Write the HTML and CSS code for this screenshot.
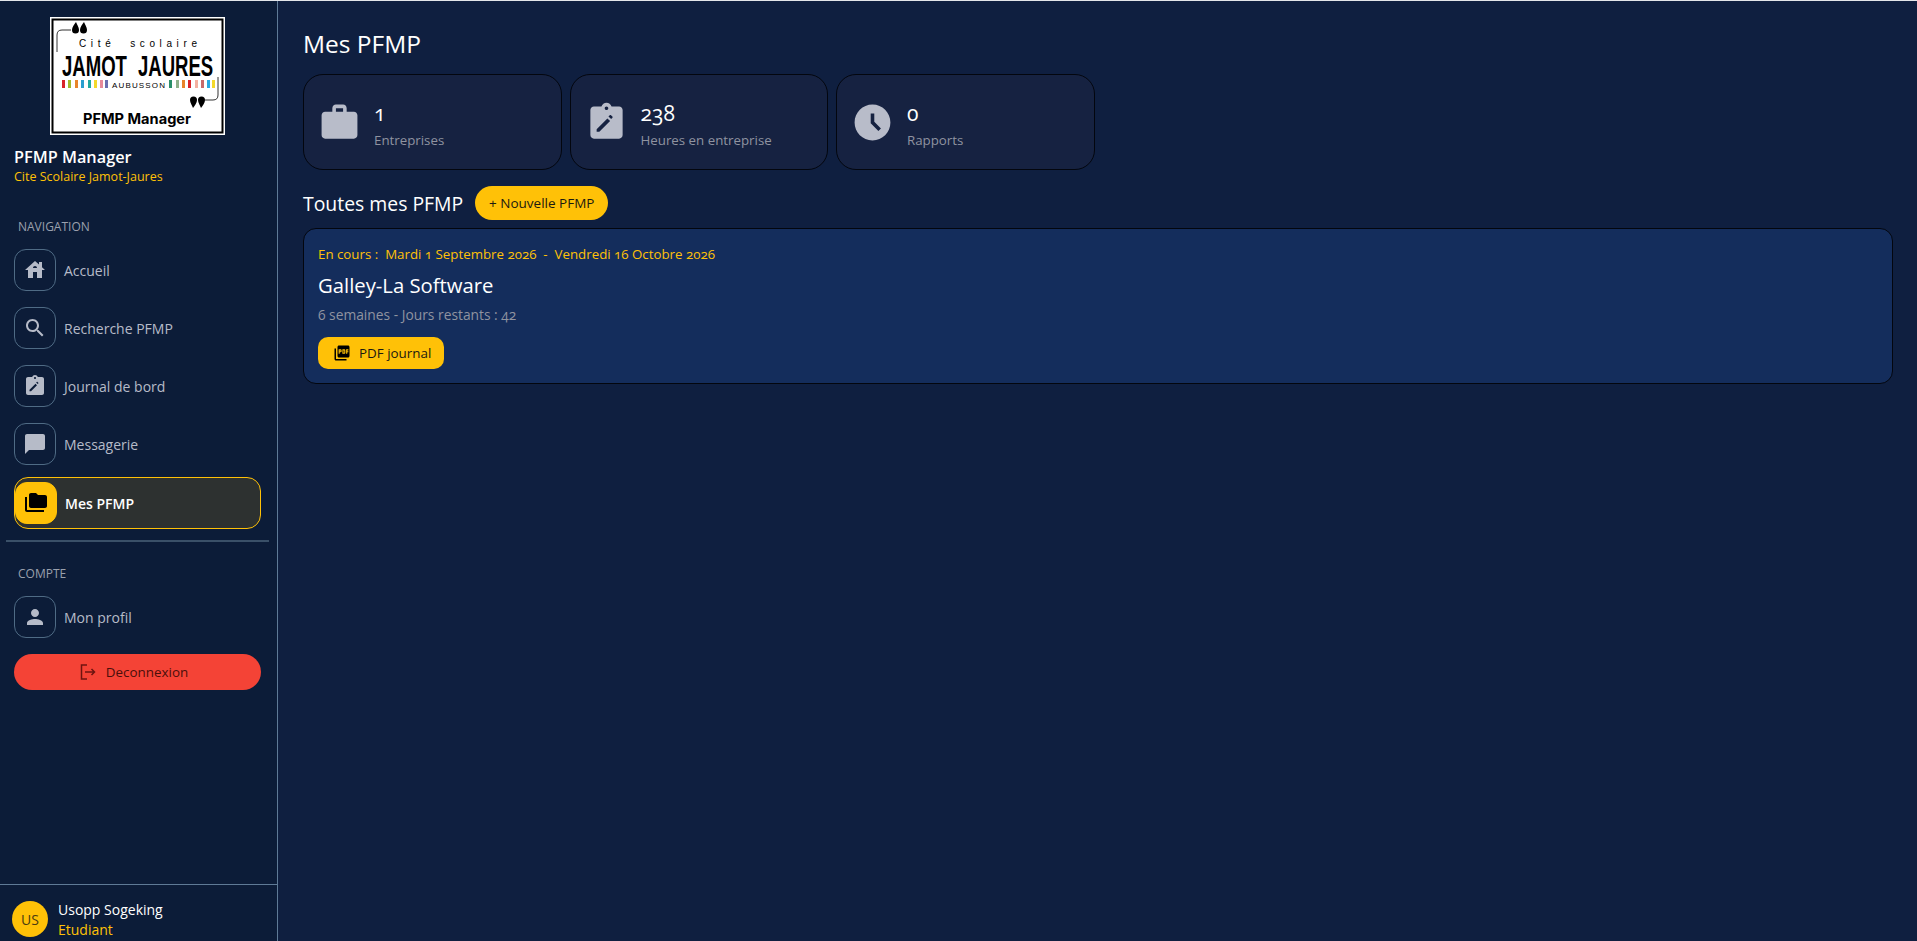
FILE: index.html
```html
<!DOCTYPE html>
<html lang="fr">
<head>
<meta charset="UTF-8">
<title>Mes PFMP</title>
<link rel="stylesheet" href="styles.css">
</head>
<body>
<div class="app">
  <aside class="sidebar">
    <svg class="logo" width="175" height="118" viewBox="0 0 175 118">
      <rect x="1" y="1" width="173" height="116" fill="#fff" stroke="#fff" stroke-width="2"/>
      <rect x="2.5" y="2.5" width="170" height="113" fill="#fff" stroke="#000" stroke-width="2"/>
      <path d="M7 35V18q0-5 5-5h9M168 60v18q0 5-5 5h-8" fill="none" stroke="#333" stroke-width="1"/>
      <g fill="#000">
        <path d="M26 5c-2 3-4 5-4 8a3.500 3.500 0 0 0 7 0c0-3-2-5-3-8zM34 5c-2 3-4 5-4 8a3.500 3.500 0 0 0 7 0c0-3-2-5-3-8z"/>
        <path d="M143 91c2-3 4-5 4-8a3.500 3.500 0 0 0-7 0c0 3 2 5 3 8zM151 91c2-3 4-5 4-8a3.500 3.500 0 0 0-7 0c0 3 2 5 3 8z"/>
      </g>
      <text class="logo-city" x="29" y="30" textLength="118">Cité  scolaire</text>
      <text class="logo-name" transform="translate(12 59) scale(.64 1)">JAMOT</text>
      <text class="logo-name" transform="translate(88 59) scale(.64 1)">JAURES</text>
      <g>
        <rect x="12" y="63" width="3" height="8" fill="#d8232a"/><rect x="18" y="63" width="3" height="8" fill="#9fb92a"/>
        <rect x="25" y="63" width="3" height="8" fill="#e8842a"/><rect x="31" y="63" width="3" height="8" fill="#2a9fd0"/>
        <rect x="38" y="63" width="3" height="8" fill="#1fa8a0"/><rect x="44" y="63" width="3" height="8" fill="#f4d92a"/>
        <rect x="50" y="63" width="3" height="8" fill="#e88a9a"/><rect x="55" y="63" width="3" height="8" fill="#6a6fb0"/>
        <rect x="119" y="63" width="3" height="8" fill="#2a8f6a"/><rect x="126" y="63" width="3" height="8" fill="#8fb08a"/>
        <rect x="132" y="63" width="3" height="8" fill="#e8842a"/><rect x="138" y="63" width="3" height="8" fill="#d8232a"/>
        <rect x="145" y="63" width="3" height="8" fill="#f4b0a0"/><rect x="151" y="63" width="3" height="8" fill="#c86a6a"/>
        <rect x="157" y="63" width="3" height="8" fill="#2aa8e0"/><rect x="162" y="63" width="3" height="8" fill="#f4d92a"/>
      </g>
      <text class="logo-town" x="62" y="71" textLength="53">AUBUSSON</text>
      <text class="logo-app" x="33" y="107" textLength="108" lengthAdjust="spacingAndGlyphs">PFMP Manager</text>
    </svg>

    <div class="brand">PFMP Manager</div>
    <div class="brand-sub">Cite Scolaire Jamot-Jaures</div>

    <div class="nav-title">NAVIGATION</div>
    <nav class="nav">
      <a class="nav-item">
        <span class="nav-icon"><svg viewBox="0 0 24 24"><path d="M19 9.300V4h-3v2.600L12 3 2 12h3v8h5v-6h4v6h5v-8h3l-3-2.700zm-9 .7c0-1.100.9-2 2-2s2 .9 2 2h-4z"/></svg></span>
        Accueil
      </a>
      <a class="nav-item">
        <span class="nav-icon"><svg viewBox="0 0 24 24"><path d="M15.500 14h-.79l-.28-.27C15.410 12.590 16 11.110 16 9.500 16 5.910 13.090 3 9.500 3S3 5.910 3 9.500 5.910 16 9.500 16c1.610 0 3.090-.59 4.230-1.570l.27.28v.79l5 4.990L20.490 19l-4.990-5zm-6 0C7.010 14 5 11.990 5 9.500S7.010 5 9.500 5 14 7.010 14 9.500 11.990 14 9.500 14z"/></svg></span>
        Recherche PFMP
      </a>
      <a class="nav-item">
        <span class="nav-icon"><svg viewBox="0 0 24 24"><path d="M19 3h-4.180C14.400 1.840 13.300 1 12 1s-2.400.84-2.820 2H5c-1.100 0-2 .9-2 2v14c0 1.100.9 2 2 2h14c1.100 0 2-.9 2-2V5c0-1.100-.9-2-2-2zm-7 0c.55 0 1 .45 1 1s-.45 1-1 1-1-.45-1-1 .45-1 1-1z"/><path class="pen" d="M7 15.500V17h1.500l6-6L13 9.500l-6 6zm8.800-6.300c.2-.2.2-.5 0-.7l-.8-.8c-.2-.2-.5-.2-.7 0l-.7.7 1.500 1.500.7-.7z" transform="translate(-.5 .2)"/></svg></span>
        Journal de bord
      </a>
      <a class="nav-item">
        <span class="nav-icon"><svg viewBox="0 0 24 24"><path d="M20 2H4c-1.100 0-1.990.9-1.990 2L2 22l4-4h14c1.100 0 2-.9 2-2V4c0-1.100-.9-2-2-2z"/></svg></span>
        Messagerie
      </a>
      <a class="nav-item active">
        <span class="nav-icon"><svg viewBox="0 0 24 24"><path d="M3 19h17v2H3c-1.100 0-2-.9-2-2V6h2v13zM23 6v9c0 1.100-.9 2-2 2H7c-1.100 0-2-.9-2-2l.01-11c0-1.100.89-2 1.990-2h5l2 2h7c1.100 0 2 .9 2 2z"/></svg></span>
        Mes PFMP
      </a>
    </nav>
    <div class="divider"></div>
    <div class="nav-title compte">COMPTE</div>
    <nav class="nav">
      <a class="nav-item">
        <span class="nav-icon"><svg viewBox="0 0 24 24"><path d="M12 12c2.210 0 4-1.790 4-4s-1.790-4-4-4-4 1.790-4 4 1.790 4 4 4zm0 2c-2.670 0-8 1.340-8 4v2h16v-2c0-2.660-5.330-4-8-4z"/></svg></span>
        Mon profil
      </a>
    </nav>
    <button class="logout">
      <svg width="18" height="18" viewBox="0 0 18 18" fill="none" stroke="#6d1410" stroke-width="1.500"><path d="M8 2H2.500v14H8M6 9h9.500M12.500 6l3 3-3 3"/></svg>
      Deconnexion
    </button>

    <div class="user">
      <div class="avatar">US</div>
      <div>
        <div class="user-name">Usopp Sogeking</div>
        <div class="user-role">Etudiant</div>
      </div>
    </div>
  </aside>

  <main class="main">
    <h1>Mes PFMP</h1>
    <div class="stats">
      <div class="stat">
        <svg class="stat-icon" viewBox="0 0 24 24"><path d="M20 6h-4V4c0-1.110-.89-2-2-2h-4c-1.110 0-2 .89-2 2v2H4c-1.110 0-1.990.89-1.990 2L2 19c0 1.110.89 2 2 2h16c1.110 0 2-.89 2-2V8c0-1.110-.89-2-2-2zm-6 0h-4V4h4v2z"/></svg>
        <div class="stat-text">
          <div class="stat-value">1</div>
          <div class="stat-label">Entreprises</div>
        </div>
      </div>
      <div class="stat">
        <svg class="stat-icon" viewBox="0 0 24 24"><path d="M19 3h-4.180C14.400 1.840 13.300 1 12 1s-2.400.84-2.820 2H5c-1.100 0-2 .9-2 2v14c0 1.100.9 2 2 2h14c1.100 0 2-.9 2-2V5c0-1.100-.9-2-2-2zm-7 0c.55 0 1 .45 1 1s-.45 1-1 1-1-.45-1-1 .45-1 1-1z"/><path class="pen-stat" d="M7 15.500V17h1.500l6-6L13 9.500l-6 6zm8.800-6.300c.2-.2.2-.5 0-.7l-.8-.8c-.2-.2-.5-.2-.7 0l-.7.7 1.500 1.500.7-.7z" transform="translate(-.5 .2)"/></svg>
        <div class="stat-text">
          <div class="stat-value">238</div>
          <div class="stat-label">Heures en entreprise</div>
        </div>
      </div>
      <div class="stat">
        <svg class="stat-icon" viewBox="0 0 24 24"><path d="M11.990 2C6.470 2 2 6.480 2 12s4.470 10 9.990 10C17.520 22 22 17.520 22 12S17.520 2 11.990 2zm3.300 14.710L11 12.410V7h2v4.590l3.710 3.710-1.420 1.410z"/></svg>
        <div class="stat-text">
          <div class="stat-value">0</div>
          <div class="stat-label">Rapports</div>
        </div>
      </div>
    </div>

    <div class="section-head">
      <h2>Toutes mes PFMP</h2>
      <button class="btn-new">+ Nouvelle PFMP</button>
    </div>

    <div class="pfmp">
      <div class="pfmp-dates">En cours :&nbsp; Mardi 1 Septembre 2026 &nbsp;-&nbsp; Vendredi 16 Octobre 2026</div>
      <div class="pfmp-name">Galley-La Software</div>
      <div class="pfmp-info">6 semaines - Jours restants : 42</div>
      <button class="btn-pdf">
        <svg width="18" height="18" viewBox="0 0 24 24"><path d="M20 2H8c-1.100 0-2 .9-2 2v12c0 1.100.9 2 2 2h12c1.100 0 2-.9 2-2V4c0-1.100-.9-2-2-2zm-8.500 7.500c0 .83-.67 1.500-1.500 1.500H9v2H7.500V7H10c.83 0 1.500.67 1.500 1.500v1zm5 2c0 .83-.67 1.500-1.500 1.500h-2.500V7H15c.83 0 1.500.67 1.500 1.500v3zm4-3H19v1h1.500V11H19v2h-1.500V7h3v1.500zM9 9.500h1v-1H9v1zM4 6H2v14c0 1.100.9 2 2 2h14v-2H4V6zm10 5.500h1v-3h-1v3z"/></svg>
        PDF journal
      </button>
    </div>
  </main>
</div>
</body>
</html>
```

FILE: styles.css
```css
* {
  box-sizing: border-box;
}
body {
  margin: 0;
  border-top: 1px solid #e4e6ea;
  font-family: "Open Sans", "Noto Sans", sans-serif;
  font-feature-settings: "onum";
  background: #0f1f40;
  color: #fff;
  height: 941px;
  overflow: hidden;
}
.app {
  display: flex;
  height: 940px;
}
.sidebar {
  width: 278px;
  flex-shrink: 0;
  display: flex;
  flex-direction: column;
  background: #0c1c38;
  border-right: 1px solid #5f7a96;
  padding-top: 16px;
}
.logo {
  display: block;
  margin-left: 50px;
}
.logo-city {
  font: 10px "Liberation Sans", sans-serif;
  white-space: pre;
}
.logo-name {
  font: bold 29px "Liberation Sans", sans-serif;
}
.logo-town {
  font: 8px "Liberation Sans", sans-serif;
}
.logo-app {
  font: bold 14px "Inter", sans-serif;
}
.brand {
  margin: 12px 0 0 14px;
  font-size: 16.300px;
  line-height: 20px;
  font-weight: 600;
}
.brand-sub {
  margin: 2px 0 0 14px;
  font-size: 12.500px;
  line-height: 16px;
  color: #ffc107;
}
.nav-title {
  margin: 34px 0 14px 18px;
  font-size: 12px;
  line-height: 16px;
  color: #9aa0ad;
}
.nav-title.compte {
  margin-top: 24px;
  margin-bottom: 14px;
}
.nav {
  display: flex;
  flex-direction: column;
  gap: 16px;
}
.nav-item {
  display: flex;
  align-items: center;
  gap: 8px;
  margin-left: 14px;
  font-size: 14px;
  font-weight: 500;
  color: #b6bbc8;
}
.nav-icon {
  width: 42px;
  height: 42px;
  display: flex;
  align-items: center;
  justify-content: center;
  border: 1px solid #4f6b85;
  border-radius: 12px;
}
.nav-icon svg {
  width: 24px;
  height: 24px;
  fill: #b6bbc8;
}
.nav-icon .pen {
  fill: #0c1c38;
}
.nav-item.active {
  width: 247px;
  height: 52px;
  margin-top: -4px;
  background: #2d3130;
  border: 1px solid #ffc107;
  border-radius: 14px;
  color: #fff;
  font-weight: 600;
}
.active .nav-icon {
  background: #ffc107;
  border-color: #ffc107;
}
.active .nav-icon svg {
  fill: #000;
}
.divider {
  height: 2px;
  margin: 11px 8px 0 6px;
  background: #3a5068;
}
.logout {
  width: 247px;
  height: 36px;
  margin: 16px 0 0 14px;
  padding: 0 8px 0 0;
  display: flex;
  align-items: center;
  justify-content: center;
  gap: 9px;
  border: 0;
  border-radius: 18px;
  background: #f44336;
  color: #4a0f0b;
  font: 13.400px "Open Sans", sans-serif;
}
.user {
  margin-top: auto;
  height: 57px;
  display: flex;
  gap: 10px;
  padding: 16px 0 0 12px;
  border-top: 1px solid #5f7a96;
}
.avatar {
  width: 36px;
  height: 36px;
  flex-shrink: 0;
  display: flex;
  align-items: center;
  justify-content: center;
  border-radius: 50%;
  background: #ffc107;
  color: #4a3c10;
  font-size: 14px;
}
.user-name {
  margin-top: -1px;
  font-size: 14px;
  line-height: 20px;
  font-weight: 500;
}
.user-role {
  font-size: 14px;
  line-height: 20px;
  color: #ffc107;
}
.main {
  flex: 1;
  padding: 28px 24px 0 25px;
}
h1 {
  margin: 0 0 15px;
  font-size: 24.500px;
  line-height: 30px;
  font-weight: 400;
}
.stats {
  display: grid;
  grid-template-columns: repeat(3, 258.500px);
  gap: 8px;
}
.stat {
  height: 96px;
  display: flex;
  align-items: center;
  gap: 13px;
  padding-left: 14px;
  background: #162241;
  border: 1px solid #03060e;
  border-radius: 20px;
}
.stat-icon {
  width: 43px;
  height: 43px;
  fill: #b8bcc9;
}
.pen-stat {
  fill: #162241;
}
.stat-text {
  padding-top: 5px;
}
.stat-value {
  font-size: 21px;
  line-height: 28px;
  font-weight: 500;
}
.stat-label {
  margin-top: 3px;
  font-size: 13.300px;
  line-height: 20px;
  color: #8f93a0;
}
.section-head {
  display: flex;
  align-items: center;
  gap: 12px;
  margin-top: 16px;
}
h2 {
  margin: 0;
  font-size: 19.400px;
  font-weight: 400;
}
.btn-new {
  height: 34px;
  width: 133px;
  border: 0;
  border-radius: 17px;
  background: #ffc107;
  color: #1b1a10;
  font: 13.500px "Open Sans", sans-serif;
}
.pfmp {
  margin-top: 8px;
  height: 156px;
  padding: 15px 14px;
  background: #142d5c;
  border: 1px solid #03060e;
  border-radius: 13px;
}
.pfmp-dates {
  font-size: 13.300px;
  line-height: 20px;
  color: #ffc107;
}
.pfmp-name {
  margin-top: 7px;
  font-size: 20.300px;
  line-height: 28px;
  font-weight: 500;
}
.pfmp-info {
  margin-top: 6px;
  font-size: 13.800px;
  line-height: 20px;
  color: #8f93a0;
}
.btn-pdf {
  margin-top: 12px;
  width: 126px;
  height: 32px;
  display: flex;
  align-items: center;
  gap: 8px;
  padding: 0 0 0 15px;
  border: 0;
  border-radius: 10px;
  background: #ffc107;
  color: #1b1a10;
  font: 13.400px "Open Sans", sans-serif;
}
```
